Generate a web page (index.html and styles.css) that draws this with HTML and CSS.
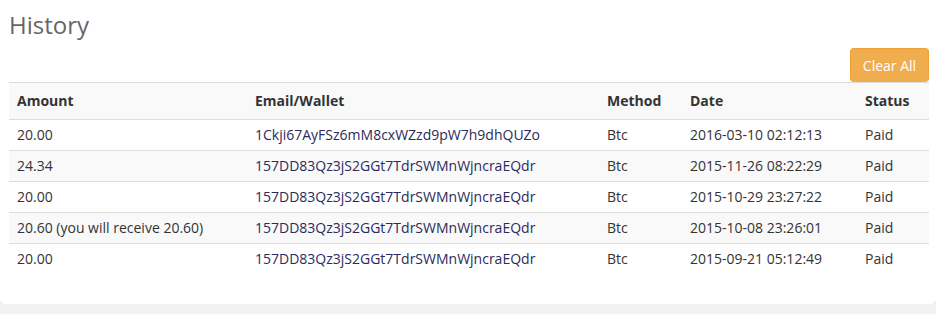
FILE: index.html
```html
<!DOCTYPE html>
<html>
<head>
<meta charset="utf-8">
<link rel="stylesheet" href="styles.css">
</head>
<body>
<div class="card">
  <h2 class="title">History</h2>
  <div class="toolbar"><button class="btn-clear">Clear All</button></div>
  <table class="history">
    <thead>
      <tr><th class="c-amt">Amount</th><th class="c-wal">Email/Wallet</th><th class="c-met">Method</th><th class="c-date">Date</th><th class="c-st">Status</th></tr>
    </thead>
    <tbody>
      <tr><td>20.00</td><td class="wallet">1Ckji67AyFSz6mM8cxWZzd9pW7h9dhQUZo</td><td>Btc</td><td>2016-03-10 02:12:13</td><td>Paid</td></tr>
      <tr><td>24.34</td><td class="wallet">157DD83Qz3jS2GGt7TdrSWMnWjncraEQdr</td><td>Btc</td><td>2015-11-26 08:22:29</td><td>Paid</td></tr>
      <tr><td>20.00</td><td class="wallet">157DD83Qz3jS2GGt7TdrSWMnWjncraEQdr</td><td>Btc</td><td>2015-10-29 23:27:22</td><td>Paid</td></tr>
      <tr><td>20.60 (you will receive 20.60)</td><td class="wallet">157DD83Qz3jS2GGt7TdrSWMnWjncraEQdr</td><td>Btc</td><td>2015-10-08 23:26:01</td><td>Paid</td></tr>
      <tr><td>20.00</td><td class="wallet">157DD83Qz3jS2GGt7TdrSWMnWjncraEQdr</td><td>Btc</td><td>2015-09-21 05:12:49</td><td>Paid</td></tr>
    </tbody>
  </table>
</div>
</body>
</html>
```
FILE: styles.css
```css
html, body {
  margin: 0;
  padding: 0;
  background: #f1f2f2;
  font-family: "Open Sans", "Liberation Sans", sans-serif;
  color: #333;
}
.card {
  width: 936px;
  box-sizing: border-box;
  background: #fff;
  border-radius: 0 0 6px 6px;
  padding: 8px 7px 30px 9px;
}
.title {
  margin: 0;
  font-size: 24px;
  font-weight: 400;
  line-height: 34px;
  color: #666;
}
.toolbar {
  display: flex;
  justify-content: flex-end;
  margin-top: 6px;
}
.btn-clear {
  width: 79px;
  height: 34px;
  background: #f0ad4e;
  border: 1px solid #eea236;
  border-bottom-color: #f0ad4e;
  border-radius: 4px;
  color: #fff;
  font-family: inherit;
  font-size: 14px;
  padding: 0;
}
.history {
  width: 100%;
  border-collapse: collapse;
  font-size: 14px;
}
.history th {
  text-align: left;
  font-weight: 700;
  background: #f9f9f9;
  padding: 9px 8px;
  line-height: 18px;
  border-top: 1px solid #ddd;
  border-bottom: 1px solid #ddd;
}
.history td {
  padding: 6px 8px;
  line-height: 18px;
  border-bottom: 1px solid #ddd;
}
.history tbody tr:nth-child(even) td {
  background: #f9f9f9;
}
.history tbody tr:last-child td {
  border-bottom: none;
}
.c-amt { width: 222px; }
.c-wal { width: 336px; }
.c-met { width: 67px; }
.c-date { width: 159px; }
.wallet { color: #2b2b5c; }
```
